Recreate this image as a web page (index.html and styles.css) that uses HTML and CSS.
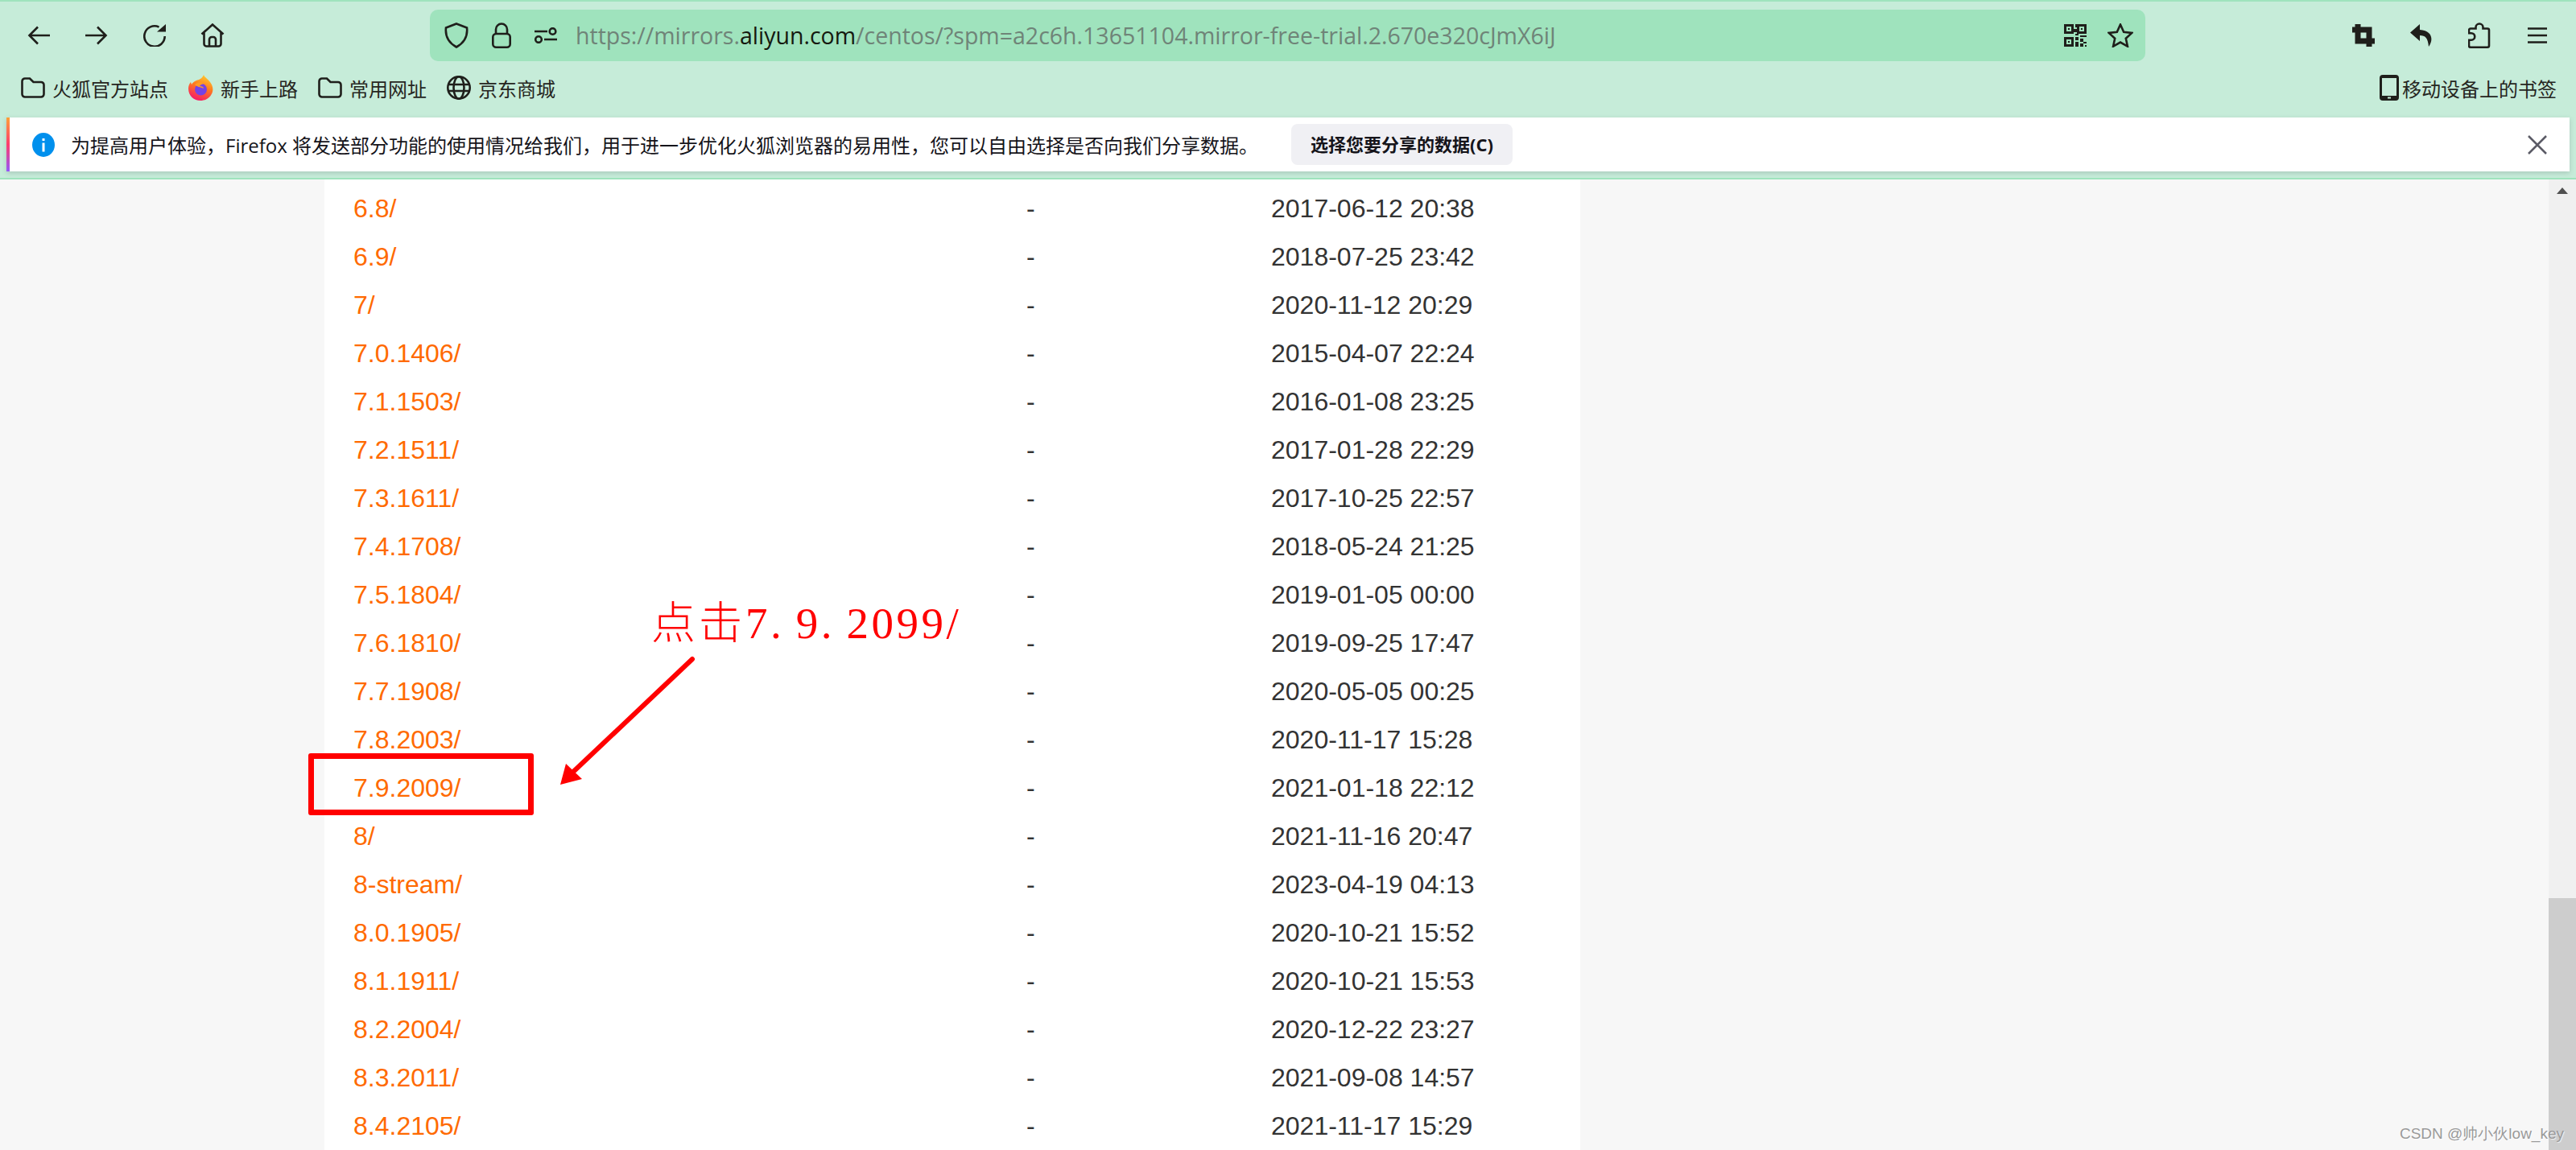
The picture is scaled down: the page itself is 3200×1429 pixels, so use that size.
FILE: index.html
```html
<!DOCTYPE html>
<html lang="en">
<head>
    <meta charset="UTF-8">
    <title>Index of /centos/</title>
    <link rel="stylesheet" href="styles.css">
</head>
<body>
    <div class="chrome">
        <div class="toolbar">
            <div class="tool-btn"><svg width="28" height="24" viewBox="0 0 28 24"><path class="ico" d="M13 1.500 2.500 12 13 22.500M2.500 12H28"/></svg></div>
            <div class="tool-btn"><svg width="28" height="24" viewBox="0 0 28 24"><path class="ico" d="M15 1.500 25.500 12 15 22.500M25.500 12H0"/></svg></div>
            <div class="tool-btn"><svg width="28" height="28" viewBox="0 0 28 28"><path class="ico" d="M26.700 15A12.700 12.700 0 1 1 19.500 3.600"/><path class="ico-fill" d="M17 9.500 28 0v9.500z"/></svg></div>
            <div class="tool-btn"><svg width="30" height="30" viewBox="0 0 30 30"><path class="ico" d="M1.500 13.500 15 1.500l13.500 12M4.500 11v14.500a3 3 0 0 0 3 3h15a3 3 0 0 0 3-3V11M11 28.500V20a3 3 0 0 1 3-3h2a3 3 0 0 1 3 3v8.500"/></svg></div>
            <div class="url-bar">
                <div class="url-icons">
                    <svg width="30" height="32" viewBox="0 0 30 32"><path class="ico" d="M15 1.500 28 6.500c1 9-2 18-13 24C4 24.500 1 15.500 2 6.500z"/></svg>
                    <svg width="24" height="32" viewBox="0 0 24 32"><rect class="ico" x="1.300" y="14" width="21.400" height="16.700" rx="4"/><path class="ico" d="M5 14V8.500a7 7 0 0 1 14 0V14"/></svg>
                    <svg width="28" height="20" viewBox="0 0 28 20"><circle class="ico" cx="22.500" cy="5" r="3.800"/><circle class="ico" cx="5" cy="15" r="3.800"/><path class="ico" d="M0 5h16M12 15h16"/></svg>
                </div>
                <div class="url-text">https://mirrors.<b>aliyun.com</b>/centos/?spm=a2c6h.13651104.mirror-free-trial.2.670e320cJmX6iJ</div>
                <div class="url-end">
                    <svg width="28" height="28" viewBox="0 0 28 28" shape-rendering="crispEdges"><path class="ico-fill" d="M0 0h12v12H0zM3 3v6h6V3zM16 0h12v12H16zM19 3v6h6V3zM0 16h12v12H0zM3 19v6h6v-6zM5 5h2v2H5zM21 5h2v2h-2zM5 21h2v2H5zM14 0h2v4h-2zM12 6h4v4h-4zM14 12h4v2h-4zM20 14h8v2h-8zM14 16h4v4h-4zM20 18h4v4h-4zM14 22h4v6h-4zM24 22h4v2h-4zM20 24h4v4h-4zM26 26h2v2h-2z"/></svg>
                    <svg width="32" height="30" viewBox="0 0 32 30"><path class="ico" d="M16 1.500 20.200 10.800 30.300 11.900 22.800 18.700 24.900 28.600 16 23.500 7.100 28.600 9.200 18.700 1.700 11.900 11.800 10.800z"/></svg>
                </div>
            </div>
            <div class="tool-btn"><svg width="28" height="28" viewBox="0 0 28 28"><path class="ico-thick" d="M7 0V21H28M0 7H21V28"/></svg></div>
            <div class="tool-btn"><svg width="28" height="28" viewBox="0 0 28 28"><path class="ico-fill" d="M12 0 0 10.500 12 21v-7c7 0 10 3 11 14 6-8 5-20-11-21z"/></svg></div>
            <div class="tool-btn"><svg width="28" height="32" viewBox="0 0 28 32"><path class="ico" d="M3 30.700a2 2 0 0 1-2-2v-7h3a4 4 0 0 0 0-8.500H1V9.500a2 2 0 0 1 2-2h6.500V6a4.500 4.500 0 0 1 9 0v1.500H24a2 2 0 0 1 2 2v19.200a2 2 0 0 1-2 2z"/></svg></div>
            <div class="tool-btn"><svg width="24" height="20" viewBox="0 0 24 20"><path class="ico" d="M0 1.500h24M0 10h24M0 18.500h24"/></svg></div>
        </div>
        <div class="bookmarks">
            <div class="bookmark"><svg width="30" height="26" viewBox="0 0 30 26"><path class="ico" d="M1.500 5a3.500 3.500 0 0 1 3.500-3.500h6l4.500 4.500H25a3.500 3.500 0 0 1 3.500 3.500V21a3.500 3.500 0 0 1-3.500 3.500H5A3.500 3.500 0 0 1 1.500 21z"/></svg>火狐官方站点</div>
            <div class="bookmark"><svg width="31" height="32" viewBox="0 0 31 32">
                <defs><linearGradient id="fox" x1="0.700" y1="0" x2="0.300" y2="1"><stop offset="0" stop-color="#ffcb2e"/><stop offset="0.450" stop-color="#ff7a1f"/><stop offset="1" stop-color="#f5156c"/></linearGradient></defs>
                <path fill="url(#fox)" d="M19 0c1 3 5 5 8 9 3 4 4 8 3 12-2 7-8 11-15 11C7 32 0 26 0 17c0-3 1-6 3-8l1 3c1-2 3-4 6-5 3-1 7-2 9-7z"/>
                <circle cx="15.500" cy="18" r="7.500" fill="#7542e5"/>
                <path fill="#ff9b24" d="M8 12c3-3 9-4 13-1-3 0-6 1-7 3 3 0 5 1 5 3-4-2-9-2-11-5z"/>
            </svg>新手上路</div>
            <div class="bookmark"><svg width="30" height="26" viewBox="0 0 30 26"><path class="ico" d="M1.500 5a3.500 3.500 0 0 1 3.500-3.500h6l4.500 4.500H25a3.500 3.500 0 0 1 3.500 3.500V21a3.500 3.500 0 0 1-3.500 3.500H5A3.500 3.500 0 0 1 1.500 21z"/></svg>常用网址</div>
            <div class="bookmark"><svg width="30" height="30" viewBox="0 0 30 30"><circle class="ico" cx="15" cy="15" r="13.700"/><ellipse class="ico" cx="15" cy="15" rx="6.500" ry="13.700"/><path class="ico" d="M1.500 11h27M1.500 19h27"/></svg>京东商城</div>
            <div class="bookmark mobile"><svg width="24" height="32" viewBox="0 0 24 32"><path class="ico-fill" fill-rule="evenodd" d="M4 0h16a4 4 0 0 1 4 4v24a4 4 0 0 1-4 4H4a4 4 0 0 1-4-4V4a4 4 0 0 1 4-4zM3 4v22h18V4zM10 27.500v2h4v-2z"/></svg>移动设备上的书签</div>
        </div>
        <div class="notice">
            <svg class="notice-icon" width="28" height="30" viewBox="0 0 28 30"><ellipse cx="14" cy="15" rx="14" ry="15" fill="#0090ed"/><rect x="12.500" y="12.500" width="3" height="11" fill="#fff"/><rect x="12.500" y="7" width="3" height="3" fill="#fff"/></svg>
            <div class="notice-text">为提高用户体验，Firefox 将发送部分功能的使用情况给我们，用于进一步优化火狐浏览器的易用性，您可以自由选择是否向我们分享数据。</div>
            <div class="notice-btn">选择您要分享的数据(C)</div>
            <svg class="notice-close" width="24" height="24" viewBox="0 0 24 24"><path d="M1 1 23 23M23 1 1 23" stroke="#5b5b66" stroke-width="2.500" fill="none"/></svg>
        </div>
    </div>

    <div class="page">
        <div class="content">
            <div class="listing" id="listing"></div>
        </div>
        <div class="scrollbar">
            <div class="scroll-up"></div>
            <div class="scroll-thumb"></div>
        </div>

        <div class="mark-box"></div>
        <div class="mark-label">点击7<span class="dot">.</span>9<span class="dot">.</span>2099/</div>
        <svg class="mark-arrow" width="190" height="170" viewBox="0 0 190 170">
            <path d="M168 6 18 148" stroke="#f00" stroke-width="6" stroke-linecap="round" fill="none"/>
            <path d="M4 162 11 136 31 155z" fill="#f00"/>
        </svg>
        <div class="watermark">CSDN @帅小伙low_key</div>
    </div>

    <script>
        const rows = [
            ["6.8/", "2017-06-12 20:38"],
            ["6.9/", "2018-07-25 23:42"],
            ["7/", "2020-11-12 20:29"],
            ["7.0.1406/", "2015-04-07 22:24"],
            ["7.1.1503/", "2016-01-08 23:25"],
            ["7.2.1511/", "2017-01-28 22:29"],
            ["7.3.1611/", "2017-10-25 22:57"],
            ["7.4.1708/", "2018-05-24 21:25"],
            ["7.5.1804/", "2019-01-05 00:00"],
            ["7.6.1810/", "2019-09-25 17:47"],
            ["7.7.1908/", "2020-05-05 00:25"],
            ["7.8.2003/", "2020-11-17 15:28"],
            ["7.9.2009/", "2021-01-18 22:12"],
            ["8/", "2021-11-16 20:47"],
            ["8-stream/", "2023-04-19 04:13"],
            ["8.0.1905/", "2020-10-21 15:52"],
            ["8.1.1911/", "2020-10-21 15:53"],
            ["8.2.2004/", "2020-12-22 23:27"],
            ["8.3.2011/", "2021-09-08 14:57"],
            ["8.4.2105/", "2021-11-17 15:29"]
        ];

        const listing = document.getElementById("listing");
        rows.forEach(([name, date]) => {
            const row = document.createElement("div");
            row.className = "row";
            row.innerHTML = `<a class="name">${name}</a><span class="size">-</span><span class="date">${date}</span>`;
            listing.appendChild(row);
        });
    </script>
</body>
</html>
```

FILE: styles.css
```css
html, body {
    margin: 0;
    height: 100%;
}

body {
    display: flex;
    flex-direction: column;
    height: 1429px;
    overflow: hidden;
    font-family: "Liberation Sans", Arial, sans-serif;
    background: #f7f7f7;
}

.ico {
    fill: none;
    stroke: #1f1f1b;
    stroke-width: 2.6;
}

.ico-thick {
    fill: none;
    stroke: #1f1f1b;
    stroke-width: 7;
}

.ico-fill {
    fill: #1f1f1b;
}

.chrome {
    height: 223px;
    box-sizing: border-box;
    border-top: 2px solid #9fe3bd;
    border-bottom: 2px solid #9fe3bd;
    background: #c6ecd9;
    font-family: "Open Sans", "Noto Sans CJK SC", sans-serif;
    color: #1f1f1b;
}

.toolbar {
    display: flex;
    align-items: center;
    height: 83px;
    padding: 0 12px;
}

.tool-btn {
    display: flex;
    justify-content: center;
    align-items: center;
    flex: 0 0 72px;
}

.url-bar {
    display: flex;
    align-items: center;
    flex: 1;
    height: 64px;
    margin: 0 235px 0 234px;
    padding: 0 15px 0 18px;
    border-radius: 10px;
    background: #9fe3bd;
}

.url-icons {
    display: flex;
    align-items: center;
    gap: 29px;
}

.url-text {
    margin-left: 23px;
    font-size: 28.500px;
    color: #6f8478;
    white-space: nowrap;
}

.url-text b {
    font-weight: 400;
    color: #15190f;
}

.url-end {
    display: flex;
    align-items: center;
    gap: 26px;
    margin-left: auto;
}

.bookmarks {
    display: flex;
    align-items: center;
    height: 48px;
    padding: 0 24px 0 26px;
    font-size: 24px;
    color: #26261f;
}

.bookmark {
    display: flex;
    align-items: center;
    gap: 9px;
    margin-right: 25px;
    white-space: nowrap;
}

.bookmark.mobile {
    gap: 4px;
    margin: 0 0 0 auto;
}

.notice {
    display: flex;
    align-items: center;
    height: 67px;
    margin: 13px 8px 0;
    padding-left: 28px;
    border-left: 4px solid;
    border-image: linear-gradient(#ffa436, #ff3d6e 50%, #9059ff) 1;
    background: #fff;
    box-shadow: 0 2px 6px rgba(58, 57, 68, 0.2);
    font-size: 24px;
    color: #15141a;
}

.notice-icon {
    flex: none;
}

.notice-text {
    margin-left: 20px;
    white-space: nowrap;
}

.notice-btn {
    margin-left: 41px;
    padding: 0 24px;
    height: 51px;
    line-height: 51px;
    border-radius: 8px;
    background: #f0f0f4;
    font-size: 22px;
    font-weight: 700;
    white-space: nowrap;
}

.notice-close {
    margin-left: auto;
    margin-right: 28px;
}

.page {
    position: relative;
    display: flex;
    flex: 1;
    min-height: 0;
}

.content {
    flex: 1;
    padding-left: 403px;
}

.listing {
    width: 1560px;
    height: 100%;
    box-sizing: border-box;
    padding: 6px 0 0 36px;
    background: #fff;
}

.row {
    display: grid;
    grid-template-columns: 836px 304px 1fr;
    height: 60px;
    line-height: 60px;
    font-size: 32px;
    color: #333;
}

.name {
    color: #ff6a00;
}

.scrollbar {
    position: relative;
    flex: 0 0 34px;
    background: #f0f0f0;
}

.scroll-up {
    width: 0;
    margin: 10px auto 0;
    border: 7px solid transparent;
    border-top: 0;
    border-bottom: 8px solid #505050;
}

.scroll-thumb {
    position: absolute;
    left: 0;
    right: 0;
    top: 893px;
    bottom: 0;
    background: #cdcdcd;
}

.mark-box {
    position: absolute;
    left: 383px;
    top: 713px;
    width: 280px;
    height: 77px;
    box-sizing: border-box;
    border: 7px solid #f00;
    border-radius: 3px;
}

.mark-label {
    position: absolute;
    left: 809px;
    top: 514px;
    font-family: "Liberation Serif", "Noto Sans CJK SC", serif;
    font-size: 55px;
    font-weight: 300;
    letter-spacing: 3.500px;
    line-height: 76px;
    color: #f00;
    white-space: nowrap;
}

.dot {
    letter-spacing: 18px;
}

.mark-arrow {
    position: absolute;
    left: 692px;
    top: 590px;
}

.watermark {
    position: absolute;
    right: 15px;
    bottom: 9px;
    font-size: 19px;
    line-height: 22px;
    color: #9a9a9a;
    text-shadow: 1px 1px 1px rgba(255, 255, 255, 0.8);
    white-space: nowrap;
}
```
